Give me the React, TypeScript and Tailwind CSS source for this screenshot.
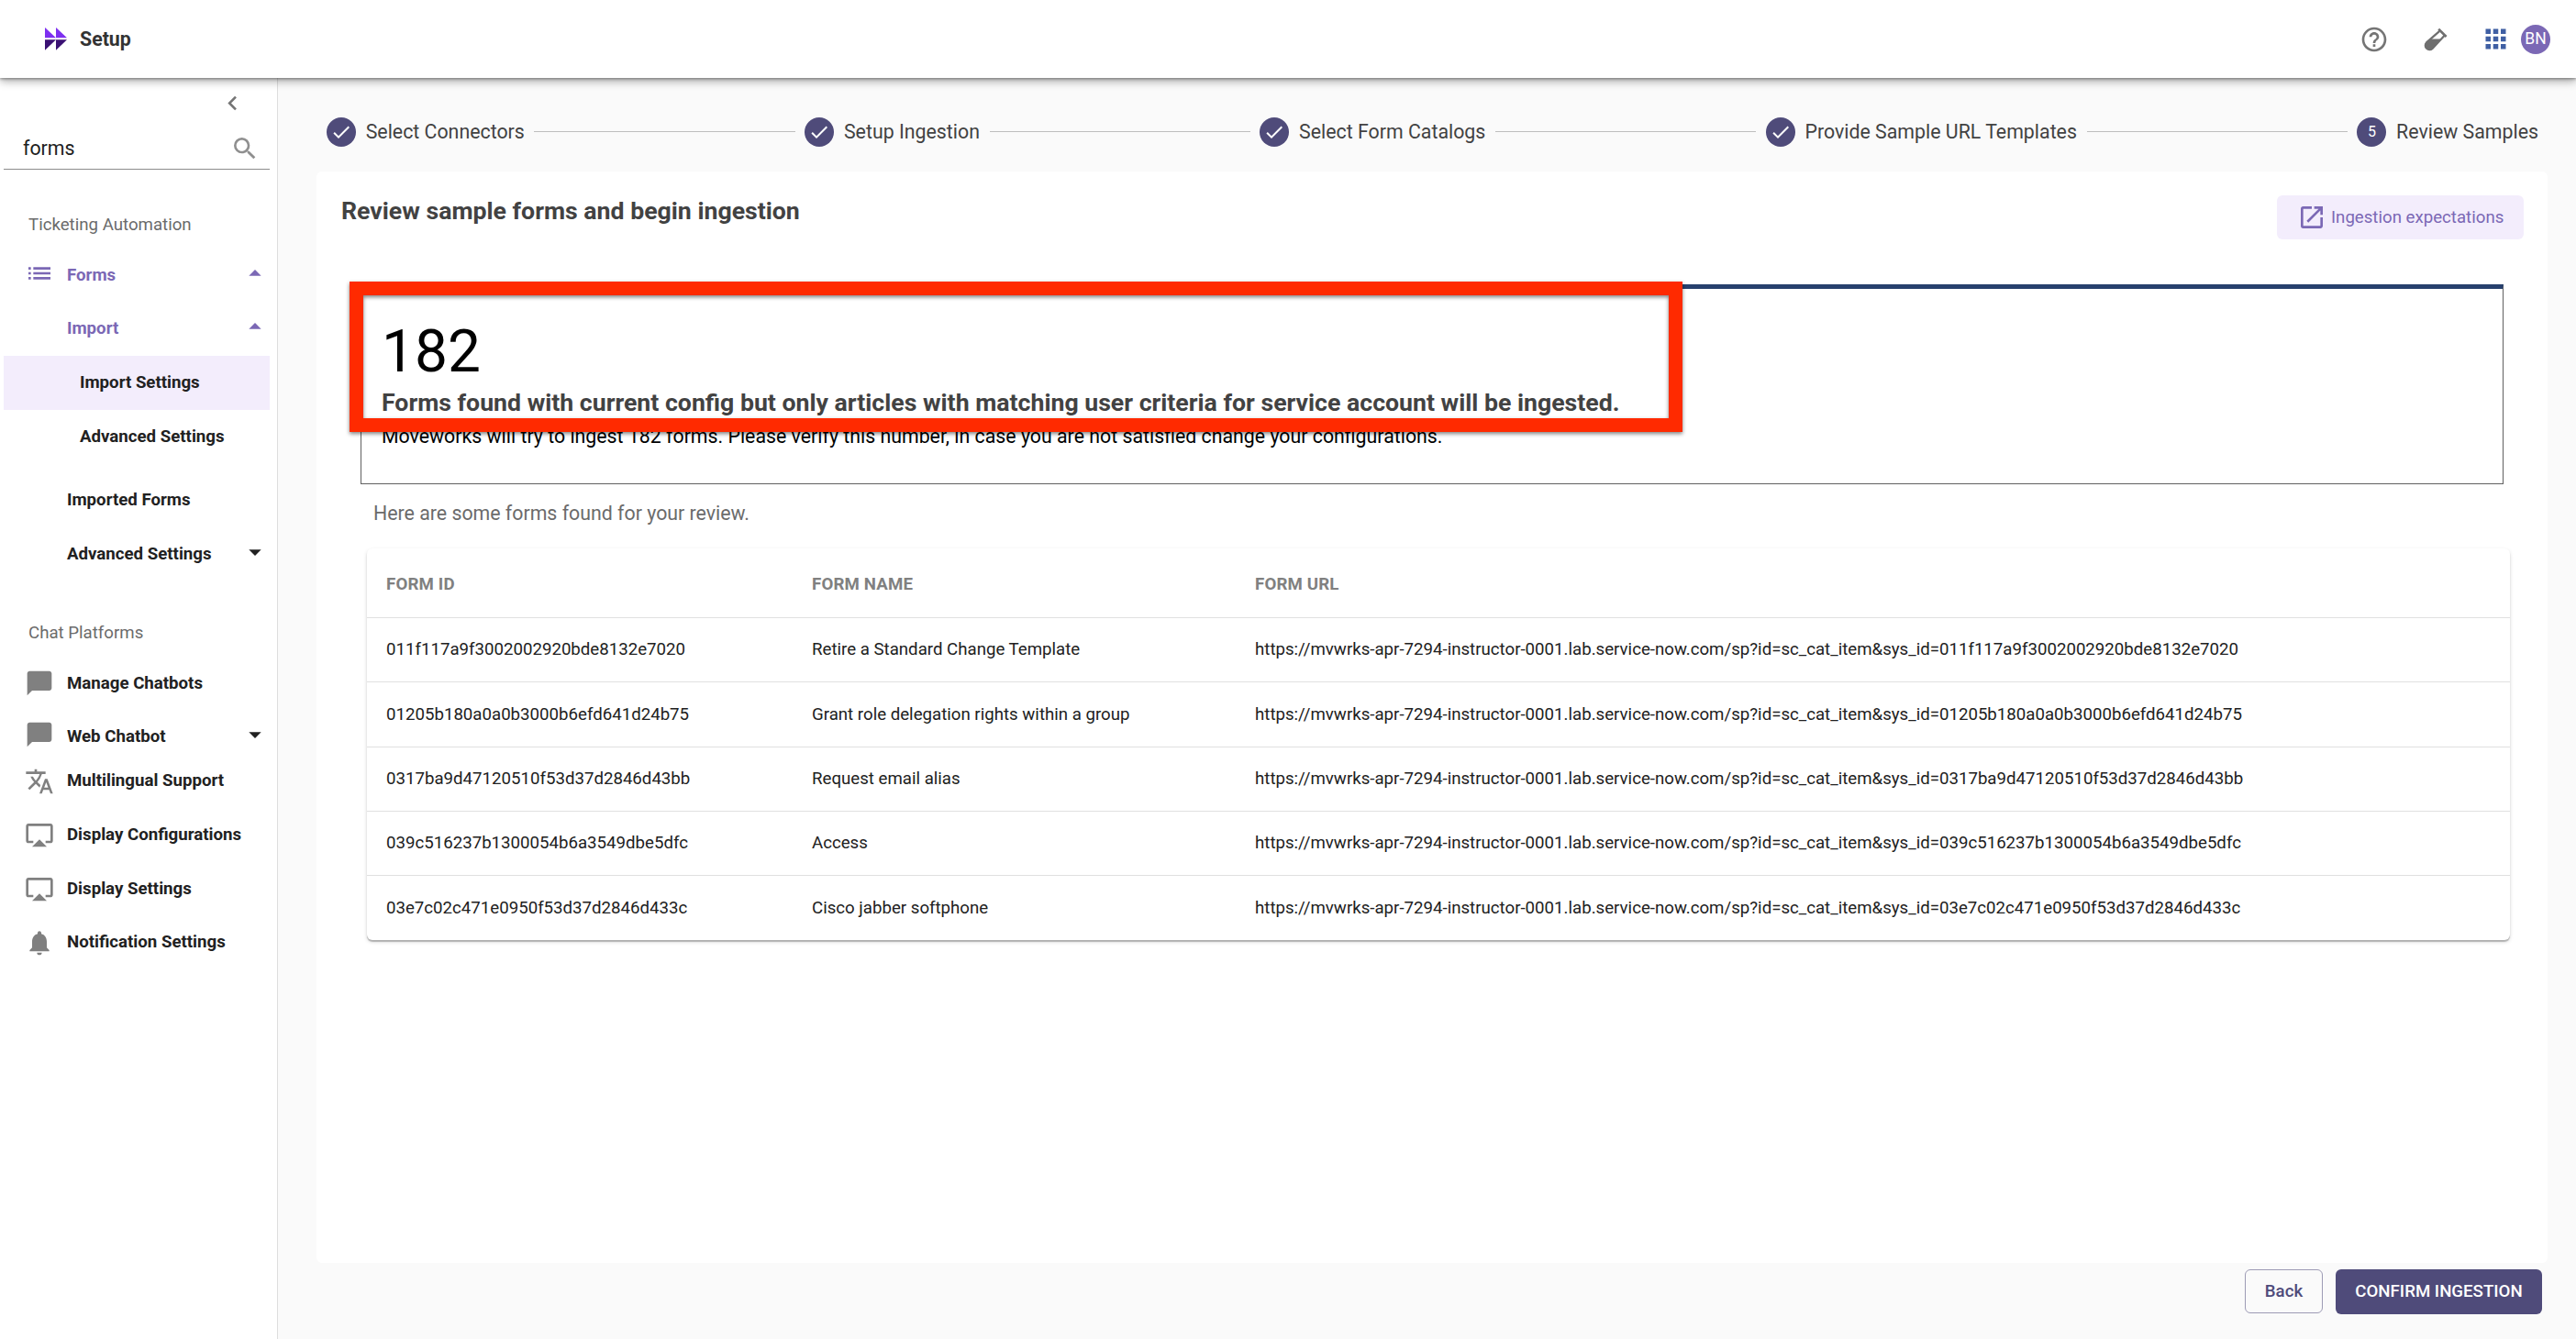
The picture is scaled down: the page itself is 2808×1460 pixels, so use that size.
import type { IconType } from 'react-icons';
import {
  MdAirplay,
  MdApps,
  MdArrowDropDown,
  MdArrowDropUp,
  MdChatBubble,
  MdCheck,
  MdChevronLeft,
  MdHelpOutline,
  MdList,
  MdNotifications,
  MdOpenInNew,
  MdSearch,
  MdTranslate,
} from 'react-icons/md';

const steps = [
  'Select Connectors',
  'Setup Ingestion',
  'Select Form Catalogs',
  'Provide Sample URL Templates',
  'Review Samples',
];

const baseUrl = 'https://mvwrks-apr-7294-instructor-0001.lab.service-now.com/sp?id=sc_cat_item&sys_id=';

const forms = [
  { id: '011f117a9f3002002920bde8132e7020', name: 'Retire a Standard Change Template', rowClass: 'h-[70px] pb-0.5' },
  { id: '01205b180a0a0b3000b6efd641d24b75', name: 'Grant role delegation rights within a group', rowClass: 'h-[71px]' },
  { id: '0317ba9d47120510f53d37d2846d43bb', name: 'Request email alias', rowClass: 'h-[70px] pb-0.5' },
  { id: '039c516237b1300054b6a3549dbe5dfc', name: 'Access', rowClass: 'h-[70px] pb-0.5' },
  { id: '03e7c02c471e0950f53d37d2846d433c', name: 'Cisco jabber softphone', rowClass: 'h-[71px]' },
];

interface NavItemProps {
  label: string;
  icon?: IconType;
  iconClass?: string;
  arrow?: 'up' | 'down';
  nested?: boolean;
  className: string;
}

function NavItem({ label, icon: Icon, iconClass = 'text-[#808080]', arrow, nested, className }: NavItemProps) {
  const Arrow = arrow === 'up' ? MdArrowDropUp : MdArrowDropDown;
  return (
    <li className={`flex items-center pl-[23px] ml-1 mr-2 text-[18.67px] font-bold ${className}`}>
      <span className={`shrink-0 ${nested ? 'w-[60px]' : 'w-[46px]'}`}>
        {Icon && <Icon className={`size-8 ${iconClass}`} />}
      </span>
      <span className="grow whitespace-nowrap">{label}</span>
      {arrow && <Arrow className="size-8 mb-1 shrink-0" />}
    </li>
  );
}

function NavHeading({ label, className }: { label: string; className: string }) {
  return <li className={`flex items-center h-[50px] pl-[31px] text-[18.67px] text-[#6b6b6b] ${className}`}>{label}</li>;
}

function Logo() {
  return (
    <svg className="w-6 h-[25px]" viewBox="0 0 24 25">
      <path d="M0 0L12 11.3H0zM12 0L24 11.3H12z" fill="#7d2ff0" />
      <path d="M0 13.2H12L0 24.8zM12 13.2H24L12 24.8z" fill="#3a1173" />
    </svg>
  );
}

function TestTube() {
  return (
    <svg className="size-[26px]" viewBox="0 0 26 26">
      <path d="M17.3 3.8L3 16.4a4.6 4.6 0 0 0 6.5 6.5L22.6 8.8" fill="none" stroke="#6f6f6f" strokeWidth="2.2" />
      <path d="M16.2 1.8L24.6 10" stroke="#6f6f6f" strokeWidth="2.6" />
      <path d="M7.8 12.6H19L9.5 22.9A4.6 4.6 0 0 1 3 16.4z" fill="#6f6f6f" />
    </svg>
  );
}

function Header() {
  return (
    <header className="relative z-10 flex items-center justify-between h-[85px] pl-[49px] pr-7 bg-white shadow-[0_1px_3px_rgba(0,0,0,0.4),0_4px_9px_rgba(0,0,0,0.3)]">
      <div className="flex items-center gap-[14px]">
        <Logo />
        <span className="text-[21.33px] font-bold text-[#333]">Setup</span>
      </div>
      <div className="flex items-center">
        <MdHelpOutline className="size-8 text-[#757575]" />
        <span className="ml-[38px]"><TestTube /></span>
        <MdApps className="size-[33px] ml-9 text-[#3f5fa3]" />
        <span className="flex items-center justify-center size-8 ml-[11px] rounded-full bg-[#7b68b5] pb-px text-[17.5px] text-white">BN</span>
      </div>
    </header>
  );
}

function Sidebar() {
  return (
    <aside className="w-[303px] shrink-0 bg-white border-r border-[#dedede] text-[#212121]">
      <div className="flex justify-end pr-[33px] pt-[12px]">
        <MdChevronLeft className="size-[31px] text-[#757575]" />
      </div>
      <div className="flex items-center justify-between h-[57px] ml-1 mr-2 pl-[21px] pr-[11px] pt-[11px] border-b border-[#8c8c8c] text-[21.33px]">
        <span>forms</span>
        <MdSearch className="size-8 text-[#8f8f8f]" />
      </div>
      <ul>
        <NavHeading label="Ticketing Automation" className="mt-[35px]" />
        <NavItem label="Forms" icon={MdList} iconClass="text-[#7b68b5] mb-[5px]" arrow="up" className="h-[60px] text-[#7b68b5]" />
        <NavItem label="Import" arrow="up" className="h-14 mb-0.5 text-[#7b68b5]" />
        <NavItem label="Import Settings" nested className="h-[59px] pb-0.5 bg-[#f3edfc]" />
        <NavItem label="Advanced Settings" nested className="h-[58px]" />
        <NavItem label="Imported Forms" className="h-[58px] mt-[11px]" />
        <NavItem label="Advanced Settings" arrow="down" className="h-[60px]" />
        <NavHeading label="Chat Platforms" className="mt-[31px]" />
        <NavItem label="Manage Chatbots" icon={MdChatBubble} className="h-[60px]" />
        <NavItem label="Web Chatbot" icon={MdChatBubble} iconClass="text-[#808080] mb-1" arrow="down" className="h-14" />
        <NavItem label="Multilingual Support" icon={MdTranslate} iconClass="text-[#808080] mt-0.5" className="h-10" />
        <NavItem label="Display Configurations" icon={MdAirplay} className="h-[58px] mt-[10px]" />
        <NavItem label="Display Settings" icon={MdAirplay} className="h-[60px]" />
        <NavItem label="Notification Settings" icon={MdNotifications} iconClass="text-[#808080] mt-0.5" className="h-[55px]" />
      </ul>
    </aside>
  );
}

function Stepper() {
  return (
    <ol className="flex items-center h-[102px] pt-4 pl-[53px] pr-[41px] text-[21.33px] text-[#424242]">
      {steps.map((step, i) => {
        const last = i === steps.length - 1;
        return (
          <li key={step} className={`flex items-center ${last ? '' : 'grow'}`}>
            <span className="flex items-center justify-center size-8 shrink-0 rounded-full bg-[#4f4b7a] text-white text-base">
              {last ? i + 1 : <MdCheck className="size-6" />}
            </span>
            <span className="ml-[10.67px] whitespace-nowrap">{step}</span>
            {!last && <span className="grow h-px mx-[10.67px] mb-px bg-[#bdbdbd]" />}
          </li>
        );
      })}
    </ol>
  );
}

function Summary() {
  return (
    <section className="relative h-[218px] ml-12 w-[2336px] mt-[49px] border border-t-[5px] border-[#616161] border-t-[#27406d] pl-[22px] text-black">
      <p className="mt-[29px] h-20 leading-[80px] text-[64px]">182</p>
      <p className="-mt-[3px] h-9 leading-9 text-[26.67px] font-bold text-[#424242]">
        Forms found with current config but only articles with matching user criteria for service account will be ingested.
      </p>
      <p className="mt-[3px] h-8 leading-8 text-[21.32px]">
        Moveworks will try to ingest 182 forms. Please verify this number, in case you are not satisfied change your configurations.
      </p>
      {/* callout frame over the count */}
      <div className="absolute -left-[13px] -top-2 w-[1453px] h-[164px] border-[15px] border-[#ff2a00] drop-shadow-[0_2px_2px_rgba(0,0,0,0.5)]" />
    </section>
  );
}

function FormsTable() {
  return (
    <div className="ml-[55px] w-[2336px] mt-[23px] rounded-md bg-white text-[18.67px] text-[#212121] shadow-[0_2px_1px_rgba(0,0,0,0.22),0_2px_4px_rgba(0,0,0,0.16)]">
      <div className="grid grid-cols-[464px_483px_1fr] items-center h-[75px] pt-0.5 font-bold tracking-[0.15px] text-[#808080] *:pl-[21px]">
        <span>FORM ID</span>
        <span>FORM NAME</span>
        <span>FORM URL</span>
      </div>
      {forms.map((form) => (
        <div key={form.id} className={`grid grid-cols-[464px_483px_1fr] items-center border-t border-[#e0e0e0] *:pl-[21px] ${form.rowClass}`}>
          <span>{form.id}</span>
          <span>{form.name}</span>
          <span>{baseUrl}{form.id}</span>
        </div>
      ))}
    </div>
  );
}

export default function App() {
  return (
    <div className="flex flex-col w-[2808px] h-[1460px] overflow-hidden bg-[#fafafa] font-[Roboto,sans-serif]">
      <Header />
      <div className="flex grow">
        <Sidebar />
        <main className="grow">
          <Stepper />
          <div className="ml-[42px] w-[2432px] h-[1190px] rounded-md bg-white">
            <div className="flex items-start justify-between pl-[27px] pr-[26px] pt-[26px]">
              <h1 className="-mt-px h-9 leading-9 text-[26.67px] font-bold text-[#424242]">Review sample forms and begin ingestion</h1>
              <button className="flex items-center gap-[5px] w-[269px] h-12 pl-[22px] rounded-md bg-[#f3edfc] text-[18.67px] text-[#7b68b5]">
                <MdOpenInNew className="size-8" />
                Ingestion expectations
              </button>
            </div>
            <Summary />
            <p className="ml-[62px] mt-4 h-[31px] leading-[31px] text-[21.33px] text-[#6b6b6b]">Here are some forms found for your review.</p>
            <FormsTable />
          </div>
          <div className="flex items-start justify-end gap-[14px] pr-[37px] pt-[7px] text-[18.67px] font-medium">
            <button className="w-[85px] h-12 rounded-md border border-[#9d9bb5] text-[#4f4b7a]">Back</button>
            <button className="w-[225px] h-[49px] pb-0.5 rounded-md bg-[#4f4b7a] text-white">CONFIRM INGESTION</button>
          </div>
        </main>
      </div>
    </div>
  );
}
